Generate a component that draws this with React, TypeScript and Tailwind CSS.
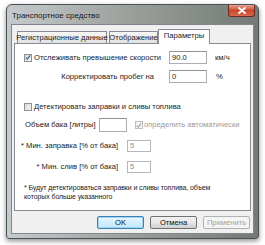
const font = { fontFamily: '"Liberation Sans", Arial, sans-serif' };

const CheckBox = ({ checked, disabled }: { checked?: boolean; disabled?: boolean }) => (
  <div
    className={`flex h-[8px] w-[8px] shrink-0 items-center justify-center border ${
      disabled ? "border-[#c0c0c0] bg-[#f4f4f4]" : "border-[#8e8f8f] bg-gradient-to-br from-[#d8d8d8] to-[#f8f8f8]"
    }`}
  >
    {checked && (
      <svg width="7" height="7" viewBox="0 0 7 7">
        <path
          d="M1 3.6 L2.7 5.4 L6 1"
          fill="none"
          stroke={disabled ? "#a8a8a8" : "#3a5a9a"}
          strokeWidth="1.3"
        />
      </svg>
    )}
  </div>
);

const Field = ({ value, w, h, disabled }: { value: string; w: string; h: string; disabled?: boolean }) => (
  <div
    className={`${w} ${h} flex shrink-0 items-center border bg-white pl-[2px] ${
      disabled ? "border-[#b5b7bb] text-[#8a8a8a]" : "border-[#abadb3] border-t-[#8f929a] text-[#222]"
    }`}
  >
    {value}
  </div>
);

const Tab = ({ label, active, w }: { label: string; active?: boolean; w: string }) => (
  <div
    className={`${w} flex shrink-0 items-center justify-center whitespace-nowrap border border-b-0 border-[#898c95] ${
      active
        ? "relative z-10 -mx-[2px] mb-[-1px] h-[15px] bg-white pb-[2px]"
        : "h-[12px] bg-gradient-to-b from-[#f6f6f6] to-[#e1e1e1]"
    }`}
  >
    {label}
  </div>
);

const Button = ({ label, primary, disabled }: { label: string; primary?: boolean; disabled?: boolean }) => (
  <div
    className={`flex h-[13px] w-[47px] items-center justify-center rounded-[2px] border ${
      primary
        ? "border-[#3c7fb1] bg-gradient-to-b from-[#eaf6fd] to-[#bee6fd] text-[#111] shadow-[inset_0_0_0_1px_#9fd5f5]"
        : disabled
        ? "border-[#adb2b5] bg-[#f4f4f4] text-[#a3a3a3]"
        : "border-[#707070] bg-gradient-to-b from-[#f2f2f2] via-[#e6e6e6] to-[#cfcfcf] text-[#111]"
    }`}
  >
    {label}
  </div>
);

export default function App() {
  return (
    <div
      className="h-[245px] w-[265px] whitespace-nowrap bg-white pl-[6px] pt-[4px] text-[7.6px] leading-none text-[#222]"
      style={font}
    >
      <div className="flex h-[235px] w-[253px] flex-col rounded-t-[6px] rounded-b-[3px] border border-[#4a5256] bg-gradient-to-r from-[#c5cacd] via-[#9a9f9b] to-[#737a76] shadow-[0_2px_5px_rgba(0,0,0,0.45)]">
        {/* заголовок */}
        <div className="flex h-[19px] items-start">
          <div className="mt-[7px] pl-[5px] text-[8px] text-[#1a1a1a]">Транспортное средство</div>
          <div className="ml-auto mr-[3px] flex h-[12px] w-[27px] items-center justify-center rounded-b-[3px] border border-t-0 border-[#6b2a22] bg-gradient-to-b from-[#e8a193] via-[#c9452e] to-[#d86a4a]">
            <svg width="8" height="7" viewBox="0 0 8 7">
              <path d="M1 1 L7 6 M7 1 L1 6" stroke="white" strokeWidth="1.8" strokeLinecap="round" />
            </svg>
          </div>
        </div>

        {/* клиентская область */}
        <div className="mx-[4px] mb-[4px] flex flex-1 flex-col border border-[#7f878c] bg-[#f0f0f0]">
          <div className="flex h-[18px] items-end gap-[2px] pl-[5px]">
            <Tab label="Регистрационные данные" w="w-[90px]" />
            <Tab label="Отображение" w="w-[49px]" />
            <Tab label="Параметры" active w="w-[52px]" />
          </div>

          <div className="mx-[2px] flex h-[168px] flex-col border border-[#898c95] bg-white pt-[7px]">
            <div className="flex h-[13px] items-center">
              <div className="flex w-[154px] items-center pl-[9px]">
                <CheckBox checked />
                <span className="ml-[2px]">Отслеживать превышение скорости</span>
              </div>
              <Field value="90.0" w="w-[38px]" h="h-[13px]" />
              <span className="ml-[8px]">км/ч</span>
            </div>

            <div className="mt-[6px] flex h-[13px] items-center">
              <div className="w-[154px] pr-[15px] text-right">Корректировать пробег на</div>
              <Field value="0" w="w-[38px]" h="h-[13px]" />
              <span className="ml-[9px]">%</span>
            </div>

            <div className="mt-[17px] flex h-[13px] items-center pl-[9px]">
              <CheckBox />
              <span className="ml-[2px]">Детектировать заправки и сливы топлива</span>
            </div>

            <div className="mt-[5px] flex h-[14px] items-center">
              <div className="w-[84px] pl-[10px]">Объем бака [литры]</div>
              <Field value="" w="w-[28px]" h="h-[14px]" />
              <div className="ml-[8px] flex items-center text-[#9a9a9a]">
                <CheckBox checked disabled />
                <span className="ml-[1px]">определить автоматически</span>
              </div>
            </div>

            <div className="mt-[8px] flex h-[12px] items-center">
              <div className="w-[112px] pr-[9px] text-right">* Мин. заправка [% от бака]</div>
              <Field value="5" w="w-[24px]" h="h-[12px]" disabled />
            </div>

            <div className="mt-[9px] flex h-[12px] items-center">
              <div className="w-[112px] pr-[9px] text-right">* Мин. слив [% от бака]</div>
              <Field value="5" w="w-[24px]" h="h-[12px]" disabled />
            </div>

            <div className="mt-[10px] pl-[9px] text-[7px] leading-[9px] tracking-[-0.1px]">
              <p>* Будут детектироваться заправки и сливы топлива, объем</p>
              <p>которых больше указанного</p>
            </div>
          </div>

          <div className="mt-[5px] flex justify-end gap-[6px] pr-[3px]">
            <Button label="OK" primary />
            <Button label="Отмена" />
            <Button label="Применить" disabled />
          </div>
        </div>
      </div>
    </div>
  );
}
